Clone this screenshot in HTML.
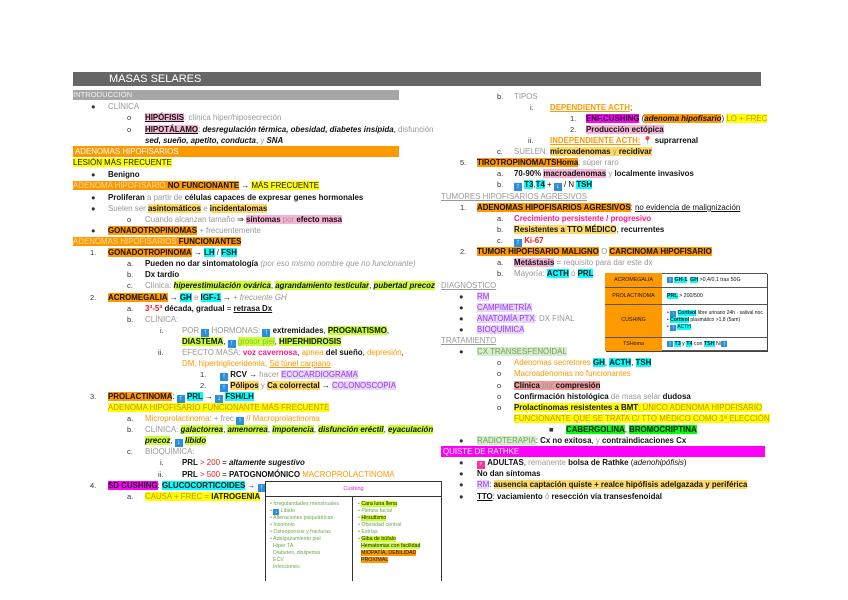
<!DOCTYPE html>
<html><head><meta charset="utf-8">
<style>
*{margin:0;padding:0;box-sizing:border-box}
body{width:848px;height:600px;background:#fff;position:relative;overflow:hidden;font-family:"Liberation Sans",sans-serif;font-size:7.9px;color:#111}
.l{position:absolute;white-space:nowrap;line-height:11px;height:11px}
.g{color:#999}
.b{font-weight:bold}
.i{font-style:italic}
.u{text-decoration:underline}
.o{background:#ff9900}
.y{background:#ffff00}
.c{background:#00ffff}
.p{background:#f6b4d6}
.m{background:#ff00ff}
.lo{background:#ffd966}
.li{background:#ccff33}
.gr{background:#00ff00}
.pu{color:#9933ff;background:#e6d8f5}
.ot{color:#ff9900}
.pt{color:#ff1a8c}
.red{color:#e02020}
.lg{color:#6aa84f;background:#d9ead3}
.up,.dn{display:inline-block;width:8px;height:8px;background:#2b8fe0;color:#fff;font-size:7px;line-height:8px;text-align:center;vertical-align:-1px;font-weight:bold}
.bar{position:absolute;color:#fff}
.mk{position:absolute;line-height:11px;font-size:7.5px;color:#333}
</style></head><body>

<div class="bar" style="left:73px;top:72px;width:688px;height:14px;background:#666;font-size:11px;line-height:14px;padding-left:36px">MASAS SELARES</div>
<div class="bar" style="left:73px;top:90px;width:326px;height:10px;background:#a6a6a6;font-size:7.6px;line-height:10px;color:#eee">INTRODUCCIÓN</div>

<!-- LEFT COLUMN -->
<div class="mk" style="left:91px;top:101px">●</div><div class="l g" style="left:108px;top:101px">CLÍNICA</div>
<div class="mk g" style="left:127px;top:112px">o</div><div class="l" style="left:145px;top:112px"><span class="b u p">HIPÓFISIS</span><span class="g">: clínica hiper/hiposecreción</span></div>
<div class="mk g" style="left:127px;top:124px">o</div><div class="l" style="left:145px;top:124px"><span class="b u p">HIPOTÁLAMO</span>: <span class="b i">desregulación térmica, obesidad, diabetes insípida</span>, <span class="g">disfunción</span></div>
<div class="l" style="left:145px;top:135px"><span class="b i">sed, sueño, apetito, conducta</span>, <span class="g">y</span> <span class="b i">SNA</span></div>
<div class="bar" style="left:73px;top:146px;width:326px;height:11px;background:#ff9900;line-height:11px;padding-left:2px">ADENOMAS HIPOFISARIOS</div>
<div class="l" style="left:73px;top:157px"><span class="y">LESIÓN MÁS FRECUENTE</span></div>
<div class="mk" style="left:91px;top:169px">●</div><div class="l b" style="left:108px;top:169px">Benigno</div>
<div class="l" style="left:73px;top:180px"><span class="o" style="color:#ffd9a0">ADENOMA HIPOFISARIO</span><span class="o b"> NO FUNCIONANTE</span> → <span class="y">MÁS FRECUENTE</span></div>
<div class="mk" style="left:91px;top:192px">●</div><div class="l" style="left:108px;top:192px"><span class="b">Proliferan</span> <span class="g">a partir de</span> <span class="b">células capaces de expresar genes hormonales</span></div>
<div class="mk" style="left:91px;top:203px">●</div><div class="l" style="left:108px;top:203px"><span class="g">Suelen ser</span> <span class="lo b">asintomáticos</span> <span class="g">e</span> <span class="lo b">incidentalomas</span></div>
<div class="mk g" style="left:127px;top:214px">o</div><div class="l" style="left:145px;top:214px"><span class="g">Cuando alcanzan tamaño</span> ⇒ <span class="p b">síntomas</span><span class="p g"> por </span><span class="p b">efecto masa</span></div>
<div class="mk" style="left:91px;top:225px">●</div><div class="l" style="left:108px;top:225px"><span class="o b">GONADOTROPINOMAS</span> <span class="g">+ frecuentemente</span></div>
<div class="l" style="left:73px;top:236px"><span class="o" style="color:#ffd9a0">ADENOMAS HIPOFISARIOS</span><span class="o b"> FUNCIONANTES</span></div>
<div class="mk g" style="left:90px;top:247px">1.</div><div class="l" style="left:108px;top:247px"><span class="o b">GONADOTROPINOMA</span> → <span class="c b">LH</span> / <span class="c b">FSH</span></div>
<div class="mk" style="left:127px;top:258px">a.</div><div class="l" style="left:145px;top:258px"><span class="b">Pueden no dar sintomatología</span> <span class="g i">(por eso mismo nombre que no funcionante)</span></div>
<div class="mk" style="left:127px;top:269px">b.</div><div class="l b" style="left:145px;top:269px">Dx tardío</div>
<div class="mk" style="left:127px;top:280px">c.</div><div class="l" style="left:145px;top:280px"><span class="g">Clínica:</span> <span class="li b i">hiperestimulación ovárica</span>, <span class="li b i">agrandamiento testicular</span>, <span class="li b i">pubertad precoz</span></div>
<div class="mk g" style="left:90px;top:292px">2.</div><div class="l" style="left:108px;top:292px"><span class="o b">ACROMEGALIA</span> → <span class="c b">GH</span> <span class="g">e</span> <span class="c b">IGF-1</span> → <span class="g i">+ frecuente GH</span></div>
<div class="mk" style="left:127px;top:303px">a.</div><div class="l" style="left:145px;top:303px"><span class="red b">3ª-5ª</span> <span class="b">década, gradual</span> = <span class="u b">retrasa Dx</span></div>
<div class="mk" style="left:127px;top:314px">b.</div><div class="l g" style="left:145px;top:314px">CLÍNICA:</div>
<div class="mk g" style="left:160px;top:325px">i.</div><div class="l" style="left:182px;top:325px"><span class="g">POR</span> <span class="up">↑</span> <span class="g">HORMONAS:</span> <span class="up">↑</span> <span class="b">extremidades</span>, <span class="li b">PROGNATISMO</span>,</div>
<div class="l" style="left:182px;top:336px"><span class="li b">DIASTEMA</span>, <span class="up">↑</span> <span class="li" style="color:#8fbc3f">grosor piel</span>, <span class="li b">HIPERHIDROSIS</span></div>
<div class="mk g" style="left:158px;top:347px">ii.</div><div class="l" style="left:182px;top:347px"><span class="g">EFECTO MASA:</span> <span class="pt b">voz cavernosa</span>, <span class="ot">apnea</span> <span class="b">del sueño</span>, <span class="ot">depresión</span>,</div>
<div class="l ot" style="left:182px;top:358px">DM, hipertrigliceridemia, <span class="u">Sd túnel carpiano</span></div>
<div class="mk g" style="left:200px;top:369px">1.</div><div class="l" style="left:220px;top:369px"><span class="up">↑</span> <span class="b">RCV</span> → <span class="g">hacer</span> <span class="pu">ECOCARDIOGRAMA</span></div>
<div class="mk g" style="left:200px;top:380px">2.</div><div class="l" style="left:220px;top:380px"><span class="up">↑</span> <span class="lo b">Pólipos</span> <span class="g">y</span> <span class="lo b">Ca colorrectal</span> → <span class="pu">COLONOSCOPIA</span></div>
<div class="mk g" style="left:90px;top:391px">3.</div><div class="l" style="left:108px;top:391px"><span class="o b">PROLACTINOMA</span>: <span class="up">↑</span> <span class="c b">PRL</span> → <span class="dn">↓</span> <span class="c b">FSH/LH</span></div>
<div class="l" style="left:108px;top:402px"><span class="y" style="color:#c89000">ADENOMA HIPOFISARIO FUNCIONANTE MÁS FRECUENTE</span></div>
<div class="mk" style="left:127px;top:413px">a.</div><div class="l" style="left:145px;top:413px"><span class="ot">Microprolactinoma:</span> <span class="g">+ frec</span> <span class="up">↑</span> <span class="ot">// Macroprolactinoma</span></div>
<div class="mk" style="left:127px;top:424px">b.</div><div class="l" style="left:145px;top:424px"><span class="g">CLÍNICA:</span> <span class="li b i">galactorrea</span>, <span class="li b i">amenorrea</span>, <span class="li b i">impotencia</span>, <span class="li b i">disfunción eréctil</span>, <span class="li b i">eyaculación</span></div>
<div class="l" style="left:145px;top:435px"><span class="li b i">precoz</span>, <span class="dn">↓</span> <span class="li b i">libido</span></div>
<div class="mk" style="left:127px;top:446px">c.</div><div class="l g" style="left:145px;top:446px">BIOQUÍMICA:</div>
<div class="mk" style="left:160px;top:457px">i.</div><div class="l" style="left:182px;top:457px"><span class="b">PRL</span> <span class="red">&gt; 200</span> = <span class="b i">altamente sugestivo</span></div>
<div class="mk" style="left:158px;top:469px">ii.</div><div class="l" style="left:182px;top:469px"><span class="b">PRL</span> <span class="red">&gt; 500</span> = <span class="b">PATOGNOMÓNICO</span> <span class="ot">MACROPROLACTINOMA</span></div>
<div class="mk g" style="left:90px;top:480px">4.</div><div class="l" style="left:108px;top:480px"><span class="m b">SD CUSHING</span>: <span class="c b">GLUCOCORTICOIDES</span> → <span class="up">↑</span></div>
<div class="mk" style="left:127px;top:491px">a.</div><div class="l" style="left:145px;top:491px"><span class="y" style="color:#c89000">CAUSA + FREC =</span><span class="y b"> IATROGENIA</span></div>

<!-- Cushing table -->
<div style="position:absolute;left:265px;top:481px;width:177px;height:100px;border-left:1.5px solid #333;border-right:1.5px solid #333;border-top:1px solid #333"></div>
<div style="position:absolute;left:265px;top:496px;width:177px;border-top:1.5px solid #333"></div>
<div style="position:absolute;left:352px;top:496px;height:85px;border-left:1.5px solid #333"></div>
<div class="l" style="left:265px;top:484px;width:177px;text-align:center;font-size:5.5px;color:#e020e0">Cushing</div>
<div style="position:absolute;left:270px;top:501px;font-size:5.3px;line-height:7px;color:#6aa84f;white-space:nowrap">
• Irregularidades menstruales<br>• <span class="dn" style="width:6px;height:6px;font-size:5px;line-height:6px">↓</span> Libido<br>• Alteraciones psiquiátricas<br>• Insomnio<br>• Osteoporosis y fracturas<br>• Adelgazamiento piel<br>&nbsp;&nbsp;Hiper TA<br>&nbsp;&nbsp;Diabetes, dislipemia<br>&nbsp;&nbsp;ECV<br>&nbsp;&nbsp;Infecciones</div>
<div style="position:absolute;left:358px;top:501px;font-size:5.3px;line-height:7px;color:#6aa84f;white-space:nowrap">
• <span class="li" style="color:#111">Cara luna llena</span><br>• Plétora facial<br>• <span class="li" style="color:#111">Hirsutismo</span><br>• Obesidad central<br>• Estrías<br>• <span class="li" style="color:#111">Giba de búfalo</span><br>&nbsp;&nbsp;<span class="li" style="color:#111">Hematomas con facilidad</span><br>&nbsp;&nbsp;<span class="o" style="color:#111">MIOPATÍA, DEBILIDAD</span><br>&nbsp;&nbsp;<span class="o" style="color:#111">PROXIMAL</span></div>

<!-- RIGHT COLUMN -->
<div class="mk" style="left:497px;top:91px">b.</div><div class="l g" style="left:514px;top:91px">TIPOS</div>
<div class="mk g" style="left:530px;top:102px">i.</div><div class="l" style="left:550px;top:102px"><span class="ot u b">DEPENDIENTE ACTH</span>;</div>
<div class="mk g" style="left:570px;top:113px">1.</div><div class="l" style="left:586px;top:113px"><span class="m b">ENF.CUSHING</span> (<span class="o b i">adenoma hipofisario</span>) <span class="y" style="color:#c89000">LO + FREC</span></div>
<div class="mk g" style="left:570px;top:124px">2.</div><div class="l" style="left:586px;top:124px"><span class="p b">Producción ectópica</span></div>
<div class="mk g" style="left:528px;top:135px">ii.</div><div class="l" style="left:550px;top:135px"><span class="ot u b">INDEPENDIENTE ACTH:</span> <span style="color:#ff3399">📍</span> <span class="b">suprarrenal</span></div>
<div class="mk" style="left:497px;top:146px">c.</div><div class="l" style="left:514px;top:146px"><span class="g">SUELEN:</span> <span class="lo b">microadenomas</span><span class="lo g"> y </span><span class="lo b">recidivar</span></div>
<div class="mk g" style="left:460px;top:157px">5.</div><div class="l" style="left:477px;top:157px"><span class="o b">TIROTROPINOMA/TSHoma</span><span class="g">: súper raro</span></div>
<div class="mk" style="left:497px;top:168px">a.</div><div class="l" style="left:514px;top:168px"><span class="b">70-90%</span> <span class="p b">macroadenomas</span> <span class="g">y</span> <span class="b">localmente invasivos</span></div>
<div class="mk" style="left:497px;top:179px">b.</div><div class="l" style="left:514px;top:179px"><span class="up">↑</span> <span class="c b">T3</span>,<span class="c b">T4</span> + <span class="dn">↓</span> / N <span class="c b">TSH</span></div>
<div class="l g u" style="left:441px;top:191px">TUMORES HIPOFISARIOS AGRESIVOS</div>
<div class="mk g" style="left:460px;top:202px">1.</div><div class="l" style="left:477px;top:202px"><span class="o b">ADENOMAS HIPOFISARIOS AGRESIVOS</span>: <span class="u">no evidencia de malignización</span></div>
<div class="mk g" style="left:497px;top:213px">a.</div><div class="l pt b" style="left:514px;top:213px">Crecimiento persistente / progresivo</div>
<div class="mk g" style="left:497px;top:224px">b.</div><div class="l" style="left:514px;top:224px"><span class="lo b">Resistentes a TTO MÉDICO</span>, <span class="b">recurrentes</span></div>
<div class="mk g" style="left:497px;top:235px">c.</div><div class="l" style="left:514px;top:235px"><span class="up">↑</span> <span class="red b">Ki-67</span></div>
<div class="mk g" style="left:460px;top:246px">2.</div><div class="l" style="left:477px;top:246px"><span class="o b">TUMOR HIPOFISARIO MALIGNO</span> <span class="g">O</span> <span class="o b">CARCINOMA HIPOFISARIO</span></div>
<div class="mk g" style="left:497px;top:257px">a.</div><div class="l" style="left:514px;top:257px"><span class="p b">Metástasis</span> <span class="g">= requisito para dar este dx</span></div>
<div class="mk g" style="left:497px;top:268px">b.</div><div class="l" style="left:514px;top:268px"><span class="g">Mayoría:</span> <span class="c b">ACTH</span> <span class="g">ó</span> <span class="c b">PRL</span></div>
<div class="l g u" style="left:441px;top:280px">DIAGNÓSTICO</div>
<div class="mk" style="left:459px;top:291px">●</div><div class="l" style="left:477px;top:291px"><span class="pu">RM</span></div>
<div class="mk" style="left:459px;top:302px">●</div><div class="l" style="left:477px;top:302px"><span class="pu">CAMPIMETRÍA</span></div>
<div class="mk" style="left:459px;top:313px">●</div><div class="l" style="left:477px;top:313px"><span class="pu">ANATOMÍA PTX</span><span class="g">: DX FINAL</span></div>
<div class="mk" style="left:459px;top:324px">●</div><div class="l" style="left:477px;top:324px"><span class="pu">BIOQUÍMICA</span></div>
<div class="l g u" style="left:441px;top:335px">TRATAMIENTO</div>
<div class="mk" style="left:459px;top:346px">●</div><div class="l" style="left:477px;top:346px"><span class="lg">CX TRANSESFENOIDAL</span></div>
<div class="mk g" style="left:497px;top:357px">o</div><div class="l" style="left:514px;top:357px"><span class="ot">Adenomas secretores</span> <span class="c b">GH</span>, <span class="c b">ACTH</span>, <span class="c b">TSH</span></div>
<div class="mk g" style="left:497px;top:368px">o</div><div class="l ot" style="left:514px;top:368px">Macroadenomas no funcionantes</div>
<div class="mk g" style="left:497px;top:380px">o</div><div class="l" style="left:514px;top:380px"><span style="background:#ea9999" class="b">Clínica <span class="g" style="font-weight:normal">por</span> compresión</span></div>
<div class="mk g" style="left:497px;top:391px">o</div><div class="l" style="left:514px;top:391px"><span class="b">Confirmación histológica</span> <span class="g">de masa selar</span> <span class="b">dudosa</span></div>
<div class="mk g" style="left:497px;top:402px">o</div><div class="l" style="left:514px;top:402px"><span class="y b">Prolactinomas resistentes a BMT</span><span class="y" style="color:#c89000">: ÚNICO ADENOMA HIPOFISARIO</span></div>
<div class="l" style="left:514px;top:413px"><span class="y" style="color:#c89000">FUNCIONANTE QUE SE TRATA C/ TTO MÉDICO COMO 1ª ELECCIÓN</span></div>
<div class="mk" style="left:549px;top:424px">■</div><div class="l" style="left:566px;top:424px"><span class="gr b">CABERGOLINA</span>, <span class="gr b">BROMOCRIPTINA</span></div>
<div class="mk" style="left:459px;top:435px">●</div><div class="l" style="left:477px;top:435px"><span class="lg">RADIOTERAPIA</span>: <span class="b">Cx no exitosa</span>, <span class="g">y</span> <span class="b">contraindicaciones Cx</span></div>
<div class="bar" style="left:441px;top:446px;width:324px;height:11px;background:#ff00ff;line-height:11px;padding-left:2px">QUISTE DE RATHKE</div>
<div class="mk" style="left:459px;top:457px">●</div><div class="l" style="left:477px;top:457px"><span class="up" style="background:#ff3399">♀</span> <span class="b">ADULTAS</span>, <span class="g">remanente</span> <span class="b">bolsa de Rathke</span> (<span class="i">adenohipófisis</span>)</div>
<div class="mk" style="left:459px;top:468px">●</div><div class="l b" style="left:477px;top:468px">No dan síntomas</div>
<div class="mk" style="left:459px;top:479px">●</div><div class="l" style="left:477px;top:479px"><span class="pu">RM</span>: <span class="lo b">ausencia captación quiste + realce hipófisis adelgazada y periférica</span></div>
<div class="mk" style="left:459px;top:491px">●</div><div class="l" style="left:477px;top:491px"><span class="u b">TTO</span>: <span class="b">vaciamiento</span> <span class="g">ó</span> <span class="b">resección vía transesfenoidal</span></div>

<!-- right table -->
<div style="position:absolute;left:605px;top:273px;width:162px;height:78px;border:1px solid #555;border-right:none;box-shadow:1px 1px 0 #444"></div>
<div style="position:absolute;left:605px;top:273px;width:57px;height:78px;background:#ff9900"></div>
<div style="position:absolute;left:605px;top:287px;width:162px;border-top:1px solid #555"></div>
<div style="position:absolute;left:605px;top:304px;width:162px;border-top:1px solid #555"></div>
<div style="position:absolute;left:605px;top:337px;width:162px;border-top:1px solid #555"></div>
<div class="l" style="left:605px;top:275px;width:57px;text-align:center;font-size:5.3px">ACROMEGALIA</div>
<div class="l" style="left:605px;top:291px;width:57px;text-align:center;font-size:5.3px">PROLACTINOMA</div>
<div class="l" style="left:605px;top:315px;width:57px;text-align:center;font-size:5.3px">CUSHING</div>
<div class="l" style="left:605px;top:339px;width:57px;text-align:center;font-size:5.3px">TSHoma</div>
<div class="l" style="left:667px;top:275px;font-size:5.3px"><span class="up" style="width:6px;height:6px">↑</span> <span class="c b">GH-1</span>, <span class="c b">GH</span> &gt;0,4/0,1 tras 50G</div>
<div class="l" style="left:667px;top:291px;font-size:5.3px"><span class="c b">PRL</span> &gt; 200/500</div>
<div style="position:absolute;left:667px;top:310px;font-size:5px;line-height:7px;white-space:nowrap">• <span class="up" style="width:6px;height:6px;font-size:5px;line-height:6px">↑</span> <span class="c b">Cortisol</span> libre urinario 24h · salival noc<br>• <span class="c b">Cortisol</span> plasmático &gt;1,8 (5am)<br>• <span class="up" style="width:6px;height:6px;font-size:5px;line-height:6px">↑</span> <span class="c">ACTH</span></div>
<div class="l" style="left:667px;top:339px;font-size:5.3px"><span class="up" style="width:6px;height:6px">↑</span> <span class="c b">T3</span> y <span class="c b">T4</span> con <span class="c b">TSH</span> N/<span class="up" style="width:6px;height:6px">↑</span></div>

</body></html>
